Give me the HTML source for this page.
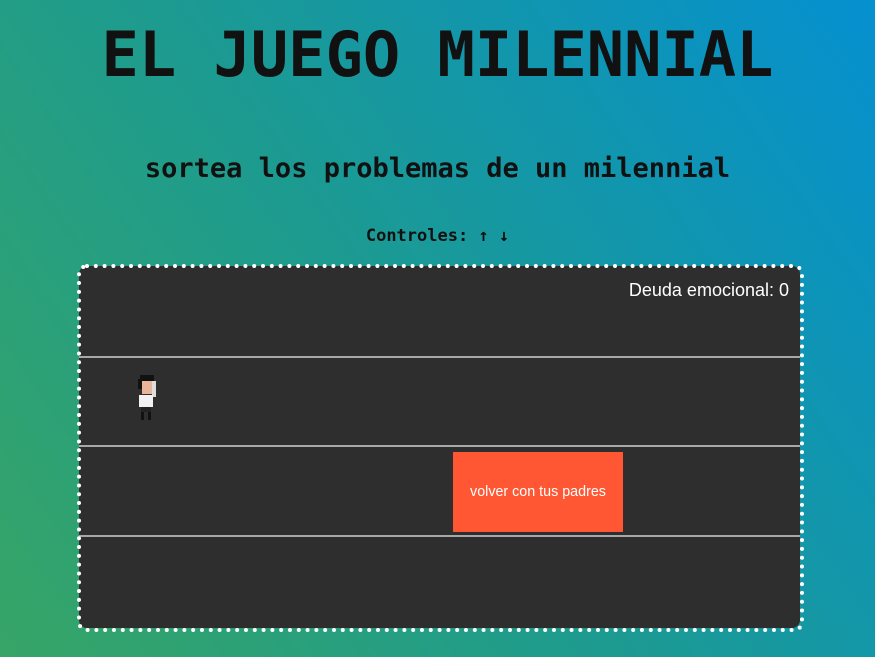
<!DOCTYPE html>
<html><head><meta charset="utf-8"><style>
html,body{margin:0;padding:0;width:875px;height:657px;overflow:hidden}
body{background:linear-gradient(55deg,#37a566 0%,#1d9b8f 45%,#0590d0 100%);font-family:"DejaVu Sans Mono","Liberation Mono",monospace;position:relative}
.t{position:absolute;left:0;width:875px;text-align:center;font-weight:bold;color:#111;white-space:nowrap}
#h1{top:18px;font-size:62px;line-height:74px}
#h2{top:153px;font-size:27px;line-height:32px}
#h3{top:226px;font-size:17px;line-height:20px}
#box{position:absolute;left:79px;top:266px;width:721px;height:362px;background:#2e2e2e;border-radius:8px}
#bd{position:absolute;left:77px;top:264px}
.ln{position:absolute;left:0;width:721px;height:2px;background:#a8a8a8}
#score{position:absolute;right:11px;top:14px;color:#fff;font:18px "Liberation Sans",Arial,sans-serif}
#ob{position:absolute;left:374px;top:186px;width:170px;height:80px;background:#ff5733;color:#fff;font:14.3px "Liberation Sans",Arial,sans-serif;display:flex;align-items:center;justify-content:center}
.p{position:absolute}
</style></head><body>
<div class="t" id="h1">EL JUEGO MILENNIAL</div>
<div class="t" id="h2">sortea los problemas de un milennial</div>
<div class="t" id="h3">Controles: ↑ ↓</div>
<div id="box">
<div id="score">Deuda emocional: 0</div>
<div class="ln" style="top:90px"></div>
<div class="ln" style="top:179px"></div>
<div class="ln" style="top:269px"></div>
<div id="ob">volver con tus padres</div>
<div class="p" style="left:61px;top:109px;width:14px;height:6px;background:#111"></div>
<div class="p" style="left:59px;top:113px;width:4px;height:10px;background:#111"></div>
<div class="p" style="left:63px;top:115px;width:10px;height:13px;background:#e8b59a"></div>
<div class="p" style="left:73px;top:115px;width:4px;height:16px;background:#ddd"></div>
<div class="p" style="left:60px;top:129px;width:14px;height:12px;background:#f2f2f2"></div>
<div class="p" style="left:62px;top:141px;width:10px;height:5px;background:#222"></div>
<div class="p" style="left:62px;top:146px;width:3px;height:8px;background:#111"></div>
<div class="p" style="left:69px;top:146px;width:3px;height:8px;background:#111"></div>
</div>
<svg id="bd" width="727" height="368"><rect x="2" y="2" width="723" height="364" rx="8" fill="none" stroke="#fff" stroke-width="4" stroke-dasharray="0 8.8" stroke-linecap="round"/></svg>
</body></html>
